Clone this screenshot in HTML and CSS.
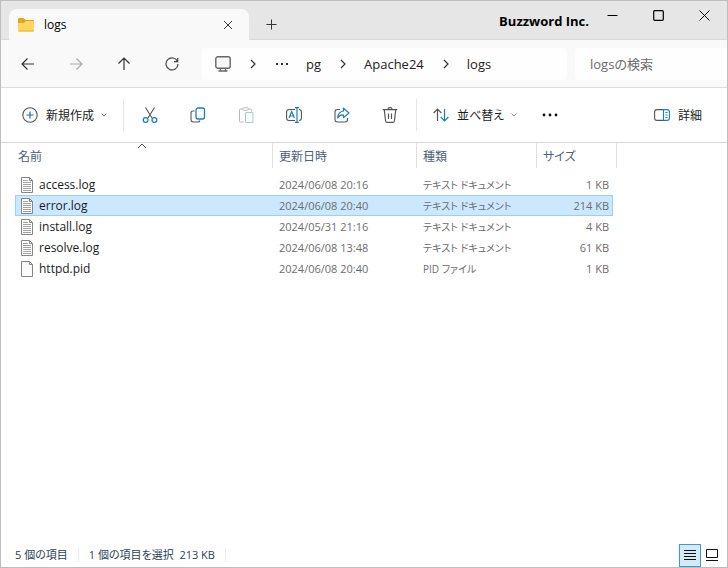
FILE: index.html
```html
<!DOCTYPE html>
<html lang="ja">
<head>
    <meta charset="UTF-8">
    <meta name="viewport" content="width=device-width, initial-scale=1.0">
    <title>logs</title>
    <link rel="stylesheet" href="styles.css">
</head>
<body>
    <!-- shared file icons -->
    <svg class="sprite" width="0" height="0" aria-hidden="true">
        <symbol id="file-text" viewBox="0 0 14 16">
            <path d="M1.5 .5h8l3 3v12h-11z" fill="#fff" stroke="#858585"/>
            <path d="M9.500 .5v3h3" fill="none" stroke="#858585"/>
            <path d="M3 3.500h5M3 5.500h8M3 7.500h8M3 9.500h8M3 11.500h8M3 13.500h8" stroke="#a3a3a3"/>
        </symbol>
        <symbol id="file-blank" viewBox="0 0 14 16">
            <path d="M1.500 .5h8l3 3v12h-11z" fill="#fbfbfb" stroke="#858585"/>
            <path d="M9.500 .5v3h3" fill="none" stroke="#858585"/>
        </symbol>
        <symbol id="chevron-right" viewBox="0 0 8 10">
            <path d="M2 1l4 4-4 4" fill="none" stroke="#333" stroke-width="1.2"/>
        </symbol>
        <symbol id="chevron-down" viewBox="0 0 8 6">
            <path d="M1.500 1.500L4 4l2.500-2.500" fill="none" stroke="#888"/>
        </symbol>
    </svg>

    <div class="titlebar">
        <div class="tab">
            <svg width="16" height="14" viewBox="0 0 16 14">
                <path d="M0 1.200Q0 0 1.200 0H5.500L7.500 2H15Q16 2 16 3V6H0z" fill="#e3a51f"/>
                <path d="M0 5H6L8 3H15Q16 3 16 4V12.500Q16 13.500 15 13.500H1Q0 13.500 0 12.500z" fill="#ffd65c"/>
                <path d="M.5 13h15" stroke="#e5ae35"/>
            </svg>
            <span class="tab-name">logs</span>
            <button class="tab-close" aria-label="タブを閉じる">
                <svg width="10" height="10" viewBox="0 0 10 10"><path d="M1 1l8 8M9 1L1 9" stroke="#333"/></svg>
            </button>
        </div>
        <button class="tab-new" aria-label="新しいタブ">
            <svg width="11" height="11" viewBox="0 0 11 11"><path d="M5.500 .5v10M.5 5.500h10" stroke="#333"/></svg>
        </button>
        <span class="brand">Buzzword Inc.</span>
        <div class="window-buttons">
            <button aria-label="最小化"><svg width="11" height="11" viewBox="0 0 11 11"><path d="M.5 5.500h10" stroke="#000"/></svg></button>
            <button aria-label="最大化"><svg width="11" height="11" viewBox="0 0 11 11"><rect x=".7" y=".7" width="9.600" height="9.600" rx="1" fill="none" stroke="#000" stroke-width="1.200"/></svg></button>
            <button aria-label="閉じる"><svg width="11" height="11" viewBox="0 0 11 11"><path d="M.5 .5l10 10M10.500 .5l-10 10" stroke="#000"/></svg></button>
        </div>
    </div>

    <div class="navbar">
        <button class="icon-button" aria-label="戻る">
            <svg width="14" height="14" viewBox="0 0 14 14"><path d="M13 7H1.500M6.500 1.500L1 7l5.500 5.500" fill="none" stroke="#333" stroke-width="1.200"/></svg>
        </button>
        <button class="icon-button" aria-label="進む" disabled>
            <svg width="14" height="14" viewBox="0 0 14 14"><path d="M1 7h11.500M7.500 1.500L13 7l-5.500 5.500" fill="none" stroke="#aaa" stroke-width="1.200"/></svg>
        </button>
        <button class="icon-button" aria-label="上へ">
            <svg width="14" height="14" viewBox="0 0 14 14"><path d="M7 13V1.500M1.500 6.500L7 1l5.500 5.500" fill="none" stroke="#333" stroke-width="1.200"/></svg>
        </button>
        <button class="icon-button" aria-label="更新">
            <svg width="14" height="14" viewBox="0 0 14 14"><path d="M12.500 4.500A6 6 0 1 0 13 7M12.700 1v3.700H9" fill="none" stroke="#444" stroke-width="1.200"/></svg>
        </button>
        <nav class="address">
            <svg class="monitor" width="16" height="16" viewBox="0 0 16 16">
                <rect x=".8" y=".8" width="14.400" height="11.400" rx="2" fill="#f6f6f6" stroke="#666" stroke-width="1.400"/>
                <path d="M5.500 12.500v2M10.500 12.500v2M3.500 15h9" stroke="#666" stroke-width="1.300"/>
            </svg>
            <svg class="sep" width="8" height="10"><use href="#chevron-right"/></svg>
            <button class="more" aria-label="上の階層">
                <svg width="12" height="2" viewBox="0 0 12 2"><path d="M0 0h2v2H0zM5 0h2v2H5zM10 0h2v2h-2z" fill="#333"/></svg>
            </button>
            <a href="#">pg</a>
            <svg class="sep" width="8" height="10"><use href="#chevron-right"/></svg>
            <a href="#">Apache24</a>
            <svg class="sep" width="8" height="10"><use href="#chevron-right"/></svg>
            <a href="#">logs</a>
        </nav>
        <input class="search" type="text" placeholder="logsの検索" aria-label="logsの検索">
    </div>

    <div class="toolbar">
        <button class="text-button">
            <svg width="16" height="16" viewBox="0 0 16 16">
                <circle cx="8" cy="8" r="7.200" fill="#fafafa" stroke="#555" stroke-width="1.100"/>
                <path d="M8 4.500v7M4.500 8h7" stroke="#0f78b8" stroke-width="1.200"/>
            </svg>
            新規作成
            <svg width="8" height="6"><use href="#chevron-down"/></svg>
        </button>
        <div class="tools">
            <button class="icon-button" aria-label="切り取り">
                <svg width="16" height="16" viewBox="0 0 16 16" fill="none">
                    <path d="M3.500 .5l6.500 10.500M12.500 .5L6 11" stroke="#555" stroke-width="1.100"/>
                    <circle cx="3.600" cy="13" r="2.400" stroke="#1480c0" stroke-width="1.200"/>
                    <circle cx="12.400" cy="13" r="2.400" stroke="#1480c0" stroke-width="1.200"/>
                </svg>
            </button>
            <button class="icon-button" aria-label="コピー">
                <svg width="16" height="16" viewBox="0 0 16 16" fill="none">
                    <path d="M4.500 4H3Q1 4 1 6v6.500Q1 15 3.500 15H8q1.500 0 2-1.500" stroke="#555" stroke-width="1.100"/>
                    <rect x="6" y="1" width="8.500" height="11" rx="2" stroke="#1480c0" stroke-width="1.300"/>
                </svg>
            </button>
            <button class="icon-button" aria-label="貼り付け" disabled>
                <svg width="16" height="16" viewBox="0 0 16 16" fill="none">
                    <path d="M5 2H2.500Q1.500 2 1.500 3v11q0 1 1 1H6M10 2h2.500q1 0 1 1v1.500" stroke="#bbb"/>
                    <rect x="4.500" y=".8" width="6" height="2.500" rx="1.200" stroke="#bbb"/>
                    <rect x="7.500" y="5.500" width="7.500" height="10" rx="1" stroke="#a3cbdc" stroke-width="1.100"/>
                </svg>
            </button>
            <button class="icon-button" aria-label="名前の変更">
                <svg width="16" height="16" viewBox="0 0 16 16" fill="none">
                    <path d="M9 2.500H3Q.6 2.500 .6 5v6q0 2.500 2.400 2.500h6M13 2.500q2.400 0 2.400 2.500v6q0 2.500-2.400 2.500" stroke="#555" stroke-width="1.100"/>
                    <path d="M11 1v14M9 .6h4M9 15.400h4M3 11l2.700-6.500L8.400 11M3.900 9h3.600" stroke="#1480c0" stroke-width="1.200"/>
                </svg>
            </button>
            <button class="icon-button" aria-label="共有">
                <svg width="16" height="16" viewBox="0 0 16 16" fill="none">
                    <path d="M6 2.500H3.500Q1 2.500 1 5v7.500Q1 15 3.500 15H11q2.500 0 2.500-2.500V11" stroke="#555" stroke-width="1.100"/>
                    <path d="M9.500 1.200L15 6l-5.500 4.600V8Q6 7.600 3.600 11 4.200 4.600 9.500 4z" stroke="#1480c0" stroke-width="1.200" stroke-linejoin="round"/>
                </svg>
            </button>
            <button class="icon-button" aria-label="削除">
                <svg width="16" height="16" viewBox="0 0 16 16" fill="none" stroke="#555" stroke-width="1.200">
                    <path d="M.8 2.700h14.400M5.800 2.500Q6 .7 8 .7t2.200 1.800M2.300 3l1.300 11q.2 1.400 1.500 1.400h5.800q1.300 0 1.500-1.400l1.300-11M6.500 6.500v5.500M9.500 6.500v5.500"/>
                </svg>
            </button>
        </div>
        <button class="text-button sort">
            <svg width="16" height="14" viewBox="0 0 16 14" fill="none">
                <path d="M4.500 13V1M.6 5l3.900-4 3.900 4" stroke="#555" stroke-width="1.200"/>
                <path d="M11.500 1v12M7.800 9l3.700 4 3.900-4" stroke="#1480c0" stroke-width="1.200"/>
            </svg>
            並べ替え
            <svg width="8" height="6"><use href="#chevron-down"/></svg>
        </button>
        <button class="icon-button" aria-label="もっと見る">
            <svg width="16" height="4" viewBox="0 0 16 4" fill="#111"><circle cx="2" cy="2" r="1.400"/><circle cx="8" cy="2" r="1.400"/><circle cx="14" cy="2" r="1.400"/></svg>
        </button>
        <button class="text-button details">
            <svg width="16" height="12" viewBox="0 0 16 12" fill="none">
                <path d="M9 .6H3Q.6 .6 .6 3v6q0 2.400 2.400 2.400h6" stroke="#555" stroke-width="1.100"/>
                <path d="M9.500 .6H13q2.400 0 2.400 2.400v6q0 2.400-2.400 2.400H9.500zM11.500 3.500h2M11.500 6h2M11.500 8.500h2" stroke="#1480c0" stroke-width="1.100"/>
            </svg>
            詳細
        </button>
    </div>

    <main class="files">
        <table>
            <colgroup>
                <col class="col-name">
                <col class="col-date">
                <col class="col-type">
                <col class="col-size">
                <col class="col-edge">
            </colgroup>
            <thead>
                <tr>
                    <th class="sorted">名前
                        <svg class="sort-mark" width="10" height="6" viewBox="0 0 10 6"><path d="M1 5l4-4 4 4" fill="none" stroke="#555"/></svg>
                    </th>
                    <th>更新日時</th>
                    <th>種類</th>
                    <th colspan="2">サイズ</th>
                </tr>
            </thead>
            <tbody>
                <tr>
                    <td><span class="file"><svg width="14" height="16"><use href="#file-text"/></svg>access.log</span></td>
                    <td>2024/06/08 20:16</td>
                    <td class="type">テキスト ドキュメント</td>
                    <td class="size">1 KB</td>
                </tr>
                <tr class="selected">
                    <td><span class="file"><svg width="14" height="16"><use href="#file-text"/></svg>error.log</span></td>
                    <td>2024/06/08 20:40</td>
                    <td class="type">テキスト ドキュメント</td>
                    <td class="size">214 KB</td>
                </tr>
                <tr>
                    <td><span class="file"><svg width="14" height="16"><use href="#file-text"/></svg>install.log</span></td>
                    <td>2024/05/31 21:16</td>
                    <td class="type">テキスト ドキュメント</td>
                    <td class="size">4 KB</td>
                </tr>
                <tr>
                    <td><span class="file"><svg width="14" height="16"><use href="#file-text"/></svg>resolve.log</span></td>
                    <td>2024/06/08 13:48</td>
                    <td class="type">テキスト ドキュメント</td>
                    <td class="size">61 KB</td>
                </tr>
                <tr>
                    <td><span class="file"><svg width="14" height="16"><use href="#file-blank"/></svg>httpd.pid</span></td>
                    <td>2024/06/08 20:40</td>
                    <td class="type">PID ファイル</td>
                    <td class="size">1 KB</td>
                </tr>
            </tbody>
        </table>
    </main>

    <footer class="statusbar">
        <span class="status">5 個の項目</span>
        <span class="status">1 個の項目を選択&nbsp; 213 KB</span>
        <div class="views">
            <button class="view active" aria-label="詳細表示">
                <svg width="12" height="10" viewBox="0 0 12 10"><path d="M0 .5h12M0 3.500h12M0 6.500h12M0 9.500h12" stroke="#111"/></svg>
            </button>
            <button class="view" aria-label="大アイコン">
                <svg width="12" height="12" viewBox="0 0 12 12"><path d="M.5 .5h11v8H.5zM0 11.500h12" fill="none" stroke="#111"/></svg>
            </button>
        </div>
    </footer>
</body>
</html>
```
FILE: styles.css
```css
* {
    box-sizing: border-box;
}
body {
    margin: 0;
    min-height: 100vh;
    display: flex;
    flex-direction: column;
    border: 1px solid #bdbdbd;
    background-color: #fff;
    color: #1b1b1b;
    font-family: "Open Sans", "Noto Sans CJK JP", sans-serif;
    font-size: 12px;
    font-feature-settings: "palt";
}
button {
    display: flex;
    align-items: center;
    justify-content: center;
    padding: 0;
    border: 0;
    background: none;
    color: inherit;
    font: inherit;
    font-feature-settings: inherit;
}
svg {
    flex: none;
    display: block;
}
.sprite {
    position: absolute;
}

/* title bar */
.titlebar {
    display: flex;
    height: 39px;
    padding-left: 8px;
    background-color: #e6e6e6;
    box-shadow: inset 0 -1px #d8d8d8;
}
.tab {
    display: flex;
    align-items: center;
    width: 240px;
    margin-top: 8px;
    padding: 0 15px 0 9px;
    border-radius: 8px 8px 0 0;
    background-color: #f9f9f9;
}
.tab-name {
    flex: 1;
    margin-left: 10px;
    color: #000;
}
.tab-close {
    width: 12px;
    height: 20px;
}
.tab-new {
    width: 44px;
    padding-top: 8px;
}
.brand {
    margin-left: auto;
    color: #000;
    font-size: 13px;
    font-weight: bold;
    line-height: 40px;
}
.window-buttons {
    display: flex;
}
.window-buttons button {
    width: 46px;
    height: 29px;
}

/* navigation */
.navbar {
    display: flex;
    align-items: center;
    height: 48px;
    padding-left: 3px;
    border-bottom: 1px solid #ddd;
    background-color: #f9f9f9;
}
.icon-button {
    width: 48px;
    height: 32px;
}
.address {
    display: flex;
    flex: 1;
    align-items: center;
    height: 32px;
    margin: 0 8px 0 6px;
    padding-left: 13px;
    border-radius: 4px;
    background-color: #fefefe;
    font-size: 13px;
}
.address a {
    color: #222;
    text-decoration: none;
}
.address .sep {
    margin: 0 17px 0 18px;
}
.address .more {
    height: 20px;
    margin: 0 18px 0 2px;
}
.search {
    width: 152px;
    height: 32px;
    padding: 0 15px;
    border: 0;
    border-radius: 4px 0 0 4px;
    background-color: #fefefe;
    font: inherit;
    font-size: 13px;
}
.search::placeholder {
    color: #6b6b6b;
}

/* commands */
.toolbar {
    display: flex;
    align-items: center;
    height: 55px;
    padding: 0 25px 0 21px;
    border-bottom: 1px solid #d5d5d5;
}
.text-button {
    gap: 8px;
    height: 32px;
}
.text-button svg + svg {
    margin-left: -2px;
}
.tools {
    display: flex;
    margin: 0 0 0 15px;
    padding: 0 2px;
    border: solid #e5e5e5;
    border-width: 0 1px;
}
.sort {
    margin: 0 8px 0 16px;
}
.details {
    margin-left: auto;
}

/* file list */
.files {
    flex: 1;
    padding-left: 14px;
}
table {
    table-layout: fixed;
    width: 602px;
    border-collapse: collapse;
}
.col-name {
    width: 258px;
}
.col-date {
    width: 144px;
}
.col-type {
    width: 120px;
}
.col-size {
    width: 76px;
}
.col-edge {
    width: 4px;
}
th {
    height: 25px;
    padding: 0 6px;
    color: #4c607a;
    font-weight: normal;
    text-align: left;
    box-shadow: inset -1px 0 #e0e0e0;
}
.sorted {
    position: relative;
    padding-left: 3px;
}
.sort-mark {
    position: absolute;
    top: 0;
    left: 122px;
}
tbody::before {
    content: "";
    display: block;
    height: 6px;
}
td {
    height: 21px;
    padding: 0 6px;
    color: #6d6d6d;
    font-size: 11px;
    line-height: 16px;
    white-space: nowrap;
}
td:first-child {
    padding-left: 5px;
}
.file {
    display: flex;
    align-items: center;
    gap: 5px;
    color: #1b1b1b;
    font-size: 12px;
}
.type {
    font-size: 10px;
}
.size {
    padding: 0 4px;
    text-align: right;
}
.selected td {
    background-color: #cce8ff;
    box-shadow: inset 0 1px #99d1f0, inset 0 -1px #99d1f0;
}
.selected td:first-child {
    box-shadow: inset 0 1px #99d1f0, inset 0 -1px #99d1f0, inset 1px 0 #99d1f0;
}
.selected .size {
    box-shadow: inset 0 1px #99d1f0, inset 0 -1px #99d1f0, inset -1px 0 #99d1f0;
}

/* status bar */
.statusbar {
    display: flex;
    align-items: center;
    height: 24px;
    padding: 0 4px;
    color: #2b3f58;
    font-size: 11px;
}
.status {
    padding: 0 10px;
    border-right: 1px solid #eee;
    line-height: 14px;
}
.views {
    display: flex;
    margin-left: auto;
}
.view {
    width: 22px;
    height: 23px;
}
.view.active {
    border: 1px solid #3a9dc8;
    background-color: #d3ebf7;
}
```
